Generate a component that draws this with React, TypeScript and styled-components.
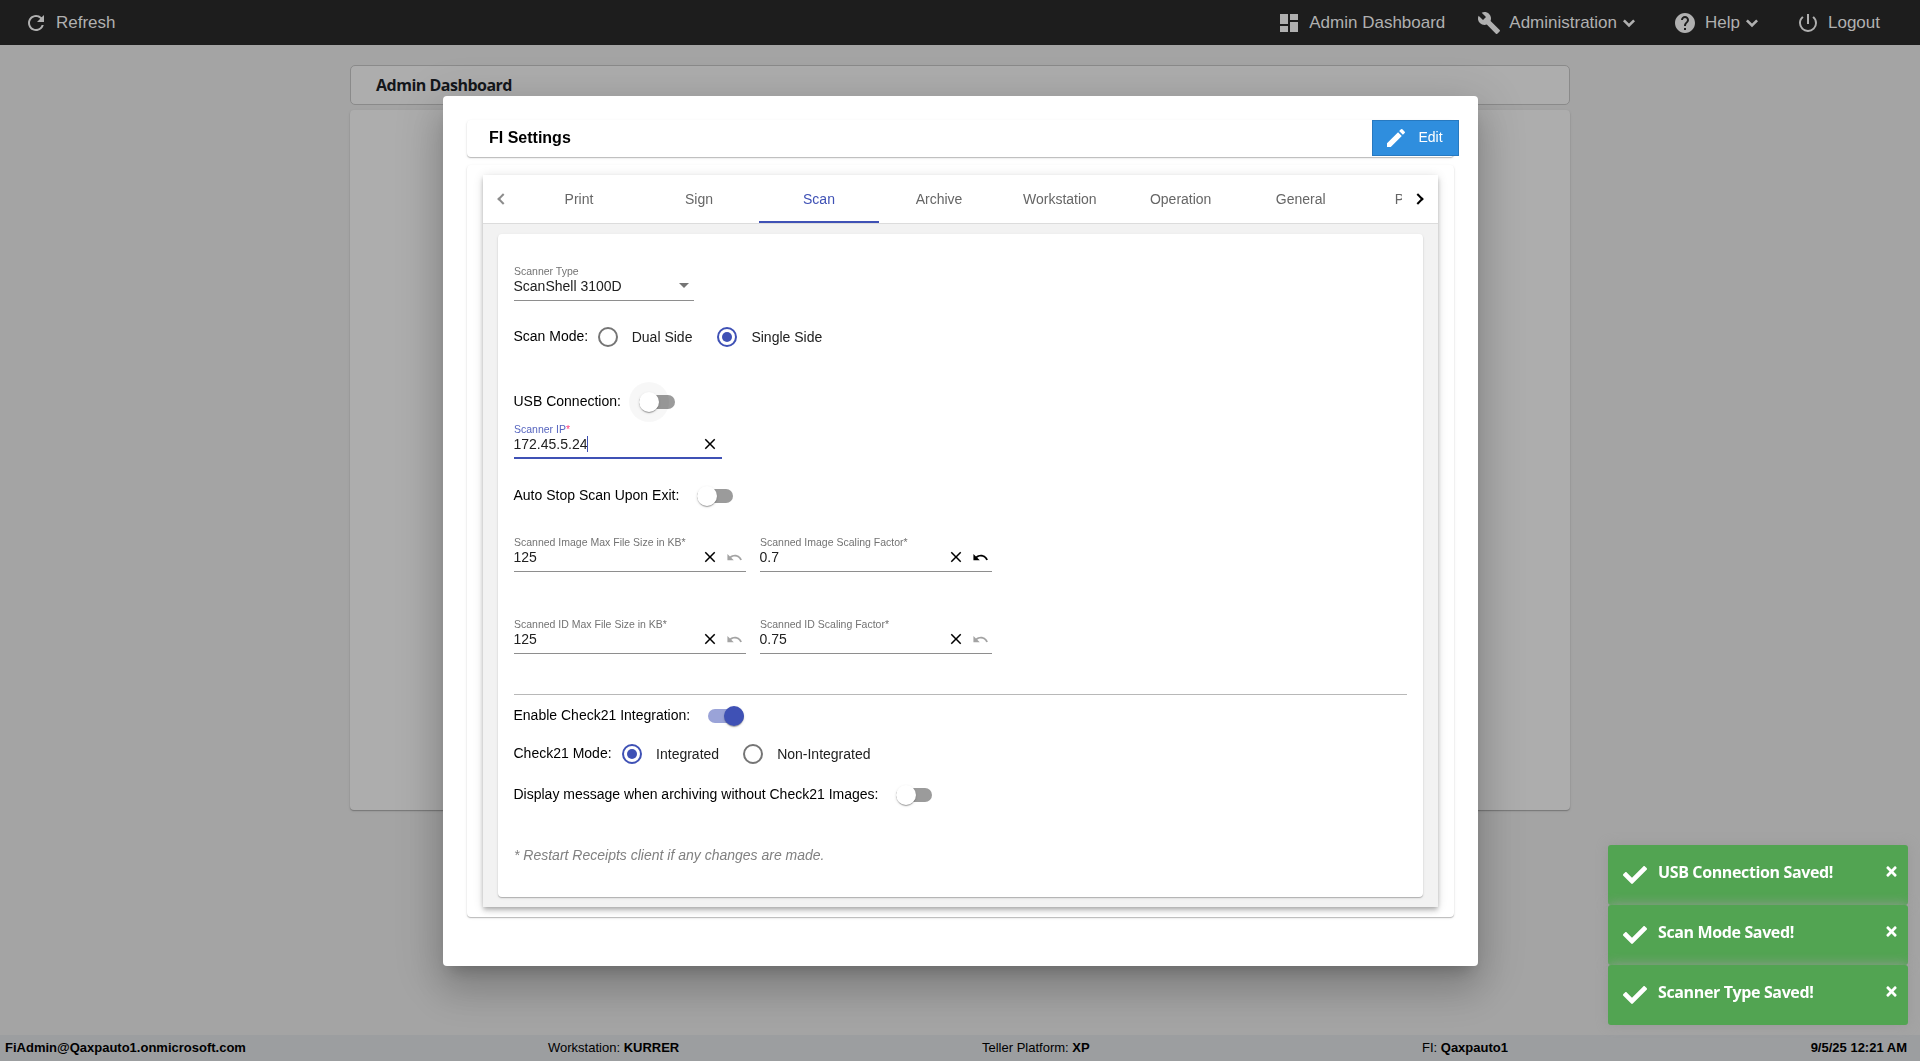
import React from 'react';
import styled, { createGlobalStyle } from 'styled-components';
import {
  MdRefresh, MdDashboard, MdBuild, MdHelp, MdPowerSettingsNew,
  MdEdit, MdClose, MdUndo,
} from 'react-icons/md';
import { FaCheck, FaTimes } from 'react-icons/fa';

const Global = createGlobalStyle`
  *, *::before, *::after { box-sizing: border-box; }
  body {
    margin: 0;
    overflow: hidden;
    font-family: "Liberation Sans", Arial, sans-serif;
    font-size: 14px;
    line-height: 16px;
    color: #000;
  }
  svg { display: block; flex: none; }
`;

const indigo = '#3f51b5';
const cardShadow = '0 1px 1px rgba(0,0,0,.22), 0 1px 3px rgba(0,0,0,.1)';

const Page = styled.div`
  height: 1061px;
  display: flex;
  flex-direction: column;
  background: #a4a4a4;
`;

const TopBar = styled.header`
  height: 45px;
  flex: none;
  display: flex;
  align-items: center;
  padding: 0 40px 0 24px;
  background: #1d1d1d;
  color: #b0b0b0;
  font-size: 17px;
  line-height: 20px;
`;

const NavItem = styled.a<{ $after?: number }>`
  display: flex;
  align-items: center;
  height: 45px;
  gap: 8px;
  margin-right: ${(p) => p.$after ?? 0}px;
  white-space: nowrap;
`;

const NavLabel = styled.span`
  display: flex;
  align-items: center;
`;

const Spacer = styled.div`
  flex: 1;
`;

const Dashboard = styled.main`
  flex: 1;
  width: 1220px;
  margin: 20px auto 0;
`;

const DashTitle = styled.h1`
  margin: 0 0 5px;
  height: 40px;
  padding: 0 25px;
  display: flex;
  align-items: center;
  border: 1px solid #8a8a8a;
  border-radius: 5px;
  background: #adadad;
  color: #14171b;
  font: 700 16px/20px "Open Sans", "Noto Sans", sans-serif;
  letter-spacing: -0.5px;
`;

const DashBody = styled.div`
  height: 700px;
  border-radius: 4px;
  background: #adadad;
  box-shadow: ${cardShadow};
`;

const Footer = styled.footer`
  height: 26px;
  flex: none;
  display: grid;
  grid-template-columns: 543px 434px 440px 1fr;
  align-items: center;
  padding: 0 13px 1px 5px;
  background: #9c9ea0;
  font-size: 13px;
`;

const LastCell = styled.div`
  display: flex;
  justify-content: space-between;
`;

const Overlay = styled.div`
  position: fixed;
  inset: 0;
  padding: 96px 0 0 443px;
`;

const Modal = styled.section`
  width: 1035px;
  height: 870px;
  padding: 24px;
  border-radius: 4px;
  background: #fff;
  box-shadow: 0 11px 15px -7px rgba(0,0,0,.2), 0 24px 38px 3px rgba(0,0,0,.14),
    0 9px 46px 8px rgba(0,0,0,.12);
`;

const ModalHead = styled.div`
  width: 987px;
  height: 37px;
  display: flex;
  align-items: flex-start;
  justify-content: space-between;
  border-radius: 4px;
  box-shadow: ${cardShadow};
`;

const ModalTitle = styled.h2`
  margin: 0;
  padding: 8px 0 0 22px;
  font-size: 16px;
  line-height: 20px;
`;

const EditButton = styled.button`
  width: 87px;
  height: 36px;
  margin-right: -5px;
  padding: 0 0 0 11px;
  display: flex;
  align-items: center;
  gap: 10.5px;
  border: 1px solid #2779c0;
  background: #2f8ede;
  color: #fff;
  font: 14px/16px "Liberation Sans", Arial, sans-serif;
`;

const EditText = styled.span`
  padding-bottom: 2px;
`;

const OuterCard = styled.div`
  width: 987px;
  height: 752px;
  margin-top: 8px;
  padding: 10px 16px;
  border-radius: 4px;
  box-shadow: ${cardShadow};
`;

const TabPanel = styled.div`
  height: 732px;
  display: flex;
  flex-direction: column;
  background: #f2f2f2;
  box-shadow: 0 2px 4px -1px rgba(0,0,0,.2), 0 4px 5px rgba(0,0,0,.14),
    0 1px 10px rgba(0,0,0,.12);
`;

const TabBar = styled.nav`
  height: 49px;
  flex: none;
  display: flex;
  background: #fff;
  border-bottom: 1px solid #dcdcdc;
`;

const Pager = styled.span<{ $back?: boolean }>`
  width: 36px;
  flex: none;
  display: flex;
  align-items: center;
  justify-content: center;
  &::after {
    content: '';
    width: 8px;
    height: 8px;
    border: solid ${(p) => (p.$back ? '#8c8c8c' : '#000')};
    border-width: 2px 2px 0 0;
    transform: ${(p) => (p.$back ? 'translateX(2px) rotate(-135deg)' : 'translateX(-2px) rotate(45deg)')};
  }
`;

const TabList = styled.div`
  flex: 1;
  min-width: 0;
  display: flex;
  overflow: hidden;
`;

const Tab = styled.a<{ $active?: boolean; $cut?: boolean }>`
  flex: none;
  min-width: 120px;
  display: flex;
  align-items: center;
  justify-content: ${(p) => (p.$cut ? 'flex-start' : 'center')};
  padding: 2px 24px 0 ${(p) => (p.$cut ? 34 : 24)}px;
  border-bottom: 2px solid ${(p) => (p.$active ? indigo : 'transparent')};
  color: ${(p) => (p.$active ? indigo : '#666')};
`;

const FormCard = styled.form`
  height: 663px;
  margin: 10px 15px 0;
  padding: 31px 16px 0;
  border-radius: 4px;
  background: #fff;
  box-shadow: ${cardShadow};
`;

const FieldRow = styled.div<{ $top?: number }>`
  display: flex;
  gap: 14px;
  margin-top: ${(p) => p.$top ?? 0}px;
`;

const FieldBox = styled.label<{ $width: number; $focus?: boolean }>`
  width: ${(p) => p.$width}px;
  height: 36px;
  display: block;
  border-bottom: ${(p) => (p.$focus ? `2px solid ${indigo}` : '1px solid #8e8e8e')};
`;

const FieldLabel = styled.span<{ $focus?: boolean }>`
  display: block;
  font-size: 10.5px;
  line-height: 12px;
  margin-bottom: 1px;
  color: ${(p) => (p.$focus ? '#5665bf' : '#737373')};
  white-space: nowrap;
`;

const Star = styled.span<{ $pink?: boolean }>`
  color: ${(p) => (p.$pink ? '#ff4081' : 'inherit')};
`;

const FieldLine = styled.span`
  display: flex;
  align-items: center;
  height: 16px;
`;

const FieldValue = styled.span`
  margin-left: -0.5px;
  color: #212121;
`;

const Caret = styled.span`
  width: 1px;
  height: 16px;
  margin-left: -0.5px;
  background: ${indigo};
`;

const FieldIcons = styled.span`
  margin-left: auto;
  margin-right: 3px;
  display: flex;
  align-items: center;
  gap: 7px;
`;

const Arrow = styled.span`
  margin: 0 5px 1px auto;
  border: 5px solid transparent;
  border-top-color: #757575;
  border-bottom: 0;
`;

const Row = styled.div<{ $top: number; $gap: number }>`
  height: 24px;
  margin-top: ${(p) => p.$top}px;
  display: flex;
  align-items: center;
  gap: ${(p) => p.$gap}px;
  white-space: nowrap;
`;

const RowLabel = styled.span`
  margin: 0 -0.5px 0 -0.5px;
  padding-bottom: 2px;
`;

const Option = styled.label<{ $after?: number }>`
  display: flex;
  align-items: center;
  gap: 14px;
  margin-right: ${(p) => p.$after ?? 0}px;
  color: #212121;
`;

const RadioRing = styled.span<{ $on?: boolean }>`
  width: 20px;
  height: 20px;
  display: grid;
  place-items: center;
  border: 2px solid ${(p) => (p.$on ? indigo : '#757575')};
  border-radius: 50%;
  &::after {
    content: '';
    width: 10px;
    height: 10px;
    border-radius: 50%;
    background: ${(p) => (p.$on ? indigo : 'transparent')};
  }
`;

const Track = styled.span<{ $on?: boolean }>`
  width: 36px;
  height: 14px;
  display: flex;
  align-items: center;
  justify-content: ${(p) => (p.$on ? 'flex-end' : 'flex-start')};
  border-radius: 8px;
  background: ${(p) => (p.$on ? '#9aa3d8' : '#9b9b9b')};
`;

const Thumb = styled.span<{ $on?: boolean; $ripple?: boolean }>`
  flex: none;
  width: 20px;
  height: 20px;
  border-radius: 50%;
  background: ${(p) => (p.$on ? indigo : '#fff')};
  box-shadow: 0 2px 1px -1px rgba(0,0,0,.2), 0 1px 1px rgba(0,0,0,.14),
    0 1px 3px rgba(0,0,0,.12)${(p) => (p.$ripple ? ', 0 0 0 10px rgba(0,0,0,.03)' : '')};
`;

const Divider = styled.div`
  height: 1px;
  margin-top: 40px;
  background: #b8b8b8;
`;

const Note = styled.p`
  margin: 40px 0 0;
  font-style: italic;
  color: #808080;
`;

const Toasts = styled.aside`
  position: fixed;
  right: 12px;
  top: 845px;
  width: 300px;
`;

const ToastBox = styled.div`
  height: 60px;
  display: flex;
  padding: 0 9px 0 15px;
  border-radius: 3px;
  background: #52a452;
  box-shadow: 0 0 12px #999;
  color: #fff;
  font: 700 16px/22px "Open Sans", "Noto Sans", sans-serif;
  letter-spacing: -0.37px;
`;

const ToastCheck = styled(FaCheck)`
  margin-top: 18px;
`;

const ToastText = styled.span`
  margin: 16px 0 0 11px;
  flex: 1;
`;

const ToastClose = styled(FaTimes)`
  margin-top: 19px;
`;

const Chevron = () => (
  <svg width="24" height="24" viewBox="0 0 24 24" fill="none" stroke="currentColor" strokeWidth="2.6">
    <path d="M6.9 9.4 12 14.5 17.1 9.4" />
  </svg>
);

const Radio = ({ on, after, children }: { on?: boolean; after?: number; children: React.ReactNode }) => (
  <Option $after={after}>
    <RadioRing $on={on} />
    {children}
  </Option>
);

const Toggle = ({ on, ripple }: { on?: boolean; ripple?: boolean }) => (
  <Track $on={on}>
    <Thumb $on={on} $ripple={ripple} />
  </Track>
);

type FieldProps = {
  label: string; value: string; width?: number; focus?: boolean; undo?: 'on' | 'off';
};

const Field = ({ label, value, width = 232, focus, undo }: FieldProps) => (
  <FieldBox $width={width} $focus={focus}>
    <FieldLabel $focus={focus}>
      {label}<Star $pink={focus}>*</Star>
    </FieldLabel>
    <FieldLine>
      <FieldValue>{value}</FieldValue>
      {focus && <Caret />}
      <FieldIcons>
        <MdClose size={18} color="#000" />
        {undo && <MdUndo size={17} color={undo === 'on' ? '#000' : '#a3a3a3'} />}
      </FieldIcons>
    </FieldLine>
  </FieldBox>
);

const tabs = ['Print', 'Sign', 'Scan', 'Archive', 'Workstation', 'Operation', 'General'];
const messages = ['USB Connection Saved!', 'Scan Mode Saved!', 'Scanner Type Saved!'];

export default function App() {
  return (
    <>
      <Global />
      <Page>
        <TopBar>
          <NavItem><MdRefresh size={24} />Refresh</NavItem>
          <Spacer />
          <NavItem $after={32}><MdDashboard size={24} />Admin Dashboard</NavItem>
          <NavItem $after={32}>
            <MdBuild size={24} />
            <NavLabel>Administration<Chevron /></NavLabel>
          </NavItem>
          <NavItem $after={32}>
            <MdHelp size={24} />
            <NavLabel>Help<Chevron /></NavLabel>
          </NavItem>
          <NavItem><MdPowerSettingsNew size={24} />Logout</NavItem>
        </TopBar>
        <Dashboard>
          <DashTitle>Admin Dashboard</DashTitle>
          <DashBody />
        </Dashboard>
        <Footer>
          <b>FiAdmin@Qaxpauto1.onmicrosoft.com</b>
          <span>Workstation: <b>KURRER</b></span>
          <span>Teller Platform: <b>XP</b></span>
          <LastCell>
            <span>FI: <b>Qaxpauto1</b></span>
            <b>9/5/25 12:21 AM</b>
          </LastCell>
        </Footer>
      </Page>

      <Overlay>
        <Modal>
          <ModalHead>
            <ModalTitle>FI Settings</ModalTitle>
            <EditButton type="button"><MdEdit size={24} /><EditText>Edit</EditText></EditButton>
          </ModalHead>
          <OuterCard>
            <TabPanel>
              <TabBar>
                <Pager $back />
                <TabList>
                  {tabs.map((t) => <Tab key={t} $active={t === 'Scan'}>{t}</Tab>)}
                  <Tab $cut>P</Tab>
                </TabList>
                <Pager />
              </TabBar>
              <FormCard>
                <FieldBox $width={180}>
                  <FieldLabel>Scanner Type</FieldLabel>
                  <FieldLine><FieldValue>ScanShell 3100D</FieldValue><Arrow /></FieldLine>
                </FieldBox>
                <Row $top={24} $gap={10}>
                  <RowLabel>Scan Mode:</RowLabel>
                  <Radio after={15}>Dual Side</Radio>
                  <Radio on>Single Side</Radio>
                </Row>
                <Row $top={41} $gap={19}>
                  <RowLabel>USB Connection:</RowLabel>
                  <Toggle ripple />
                </Row>
                <FieldRow $top={9}>
                  <Field label="Scanner IP" value="172.45.5.24" width={208} focus />
                </FieldRow>
                <Row $top={25} $gap={18}>
                  <RowLabel>Auto Stop Scan Upon Exit:</RowLabel>
                  <Toggle />
                </Row>
                <FieldRow $top={28}>
                  <Field label="Scanned Image Max File Size in KB" value="125" undo="off" />
                  <Field label="Scanned Image Scaling Factor" value="0.7" undo="on" />
                </FieldRow>
                <FieldRow $top={46}>
                  <Field label="Scanned ID Max File Size in KB" value="125" undo="off" />
                  <Field label="Scanned ID Scaling Factor" value="0.75" undo="off" />
                </FieldRow>
                <Divider />
                <Row $top={9} $gap={18}>
                  <RowLabel>Enable Check21 Integration:</RowLabel>
                  <Toggle on />
                </Row>
                <Row $top={14} $gap={11}>
                  <RowLabel>Check21 Mode:</RowLabel>
                  <Radio on after={13}>Integrated</Radio>
                  <Radio>Non-Integrated</Radio>
                </Row>
                <Row $top={17} $gap={18}>
                  <RowLabel>Display message when archiving without Check21 Images:</RowLabel>
                  <Toggle />
                </Row>
                <Note>* Restart Receipts client if any changes are made.</Note>
              </FormCard>
            </TabPanel>
          </OuterCard>
        </Modal>
      </Overlay>

      <Toasts>
        {messages.map((m) => (
          <ToastBox key={m}>
            <ToastCheck size={24} />
            <ToastText>{m}</ToastText>
            <ToastClose size={15} />
          </ToastBox>
        ))}
      </Toasts>
    </>
  );
}
